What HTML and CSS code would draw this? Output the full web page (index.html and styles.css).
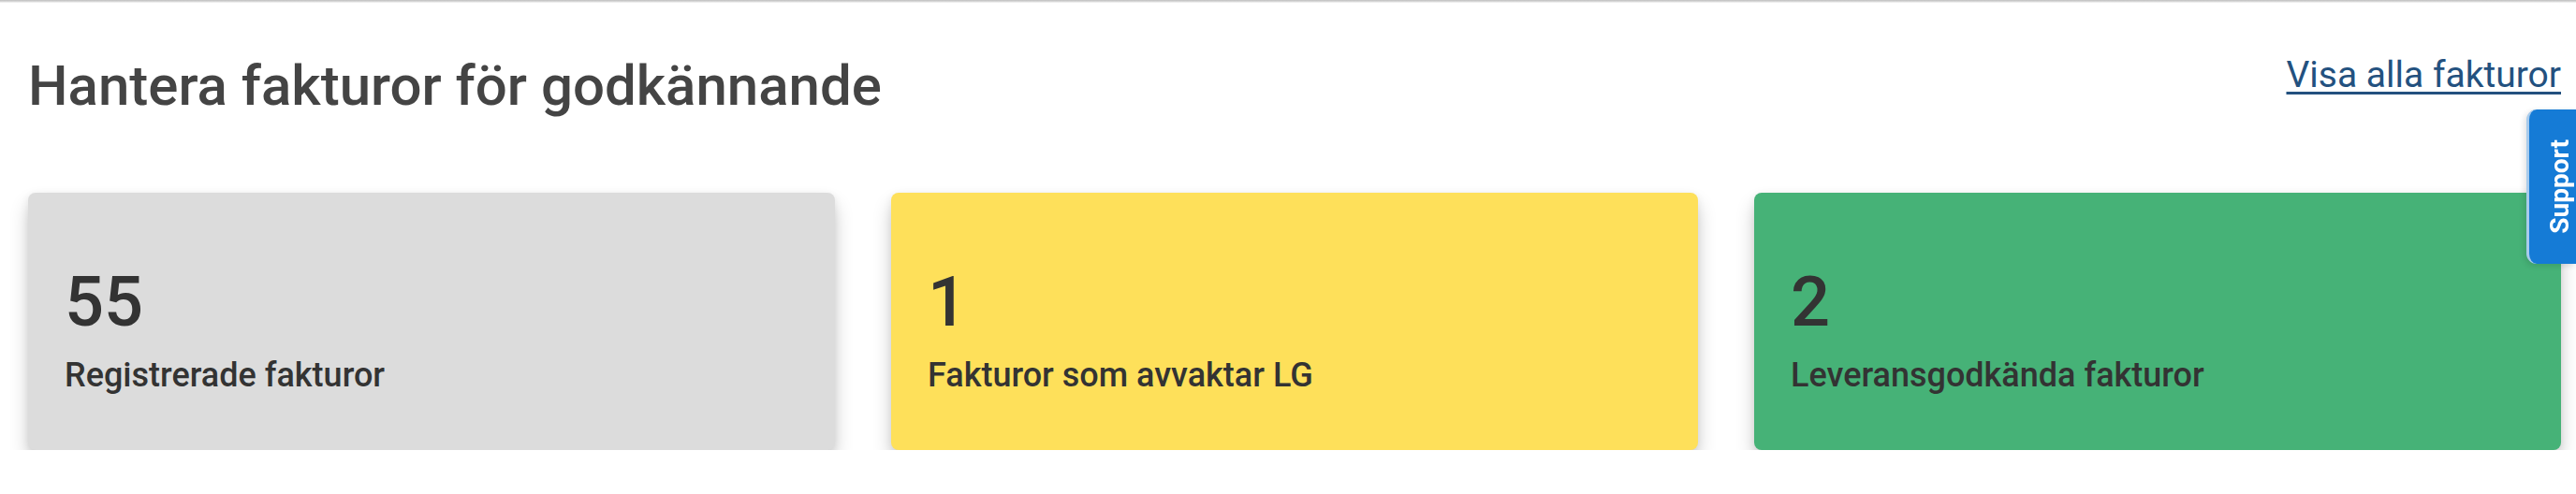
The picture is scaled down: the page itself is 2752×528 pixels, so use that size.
FILE: index.html
```html
<!DOCTYPE html>
<html lang="sv">
<head>
<meta charset="utf-8">
<title>Hantera fakturor för godkännande</title>
<link rel="stylesheet" href="styles.css">
</head>
<body>
<div class="topline"></div>
<main class="page">
  <header class="header">
    <h1 class="title">Hantera fakturor för godkännande</h1>
    <a class="all-link" href="#">Visa alla fakturor</a>
  </header>
  <section class="cards">
    <div class="card card-gray">
      <div class="card-number">55</div>
      <div class="card-label">Registrerade fakturor</div>
    </div>
    <div class="card card-yellow">
      <div class="card-number">1</div>
      <div class="card-label">Fakturor som avvaktar LG</div>
    </div>
    <div class="card card-green">
      <div class="card-number">2</div>
      <div class="card-label">Leveransgodkända fakturor</div>
    </div>
  </section>
</main>
<a class="support-tab" href="#"><span class="support-text">Support</span></a>
</body>
</html>
```
FILE: styles.css
```css
* { box-sizing: border-box; }
html, body {
  margin: 0;
  padding: 0;
  background: #ffffff;
  font-family: Roboto, "Liberation Sans", Arial, sans-serif;
}
.topline {
  height: 3px;
  background: linear-gradient(#bdbdbd, #e2e2e2 70%, #ffffff);
}
.page {
  padding: 53px 16px 0 30px;
}
.header {
  display: flex;
  justify-content: space-between;
  align-items: flex-start;
}
.title {
  margin: 0;
  font-size: 60px;
  line-height: 72px;
  font-weight: 500;
  color: #444444;
}
.all-link {
  margin-top: 0;
  font-size: 39px;
  line-height: 48px;
  color: #23517f;
  text-decoration: underline;
  text-decoration-thickness: 3px;
  text-underline-offset: 5px;
}
.cards {
  margin-top: 78px;
  display: grid;
  grid-template-columns: repeat(3, 1fr);
  gap: 60px;
}
.card {
  height: 275px;
  padding: 80px 40px 0 39px;
  border-radius: 8px;
  box-shadow: 0 12px 20px rgba(0, 0, 0, 0.2), 0 2px 8px rgba(0, 0, 0, 0.07);
  color: #333333;
}
.card-gray { background: #dcdcdc; }
.card-yellow { background: #fee05a; }
.card-green { background: #46b277; }
.card-number {
  font-size: 74px;
  line-height: 74px;
  font-weight: 500;
}
.card-label {
  margin-top: 19px;
  font-size: 36px;
  line-height: 44px;
  font-weight: 500;
}
.support-tab {
  position: fixed;
  right: 0;
  top: 117px;
  width: 53px;
  height: 165px;
  padding-left: 15px;
  display: flex;
  align-items: center;
  justify-content: center;
  background: #157bd6;
  border-left: 3px solid #a8cbec;
  border-radius: 11px 0 0 11px;
  box-shadow: -2px 2px 6px rgba(0, 0, 0, 0.12);
  text-decoration: none;
}
.support-text {
  writing-mode: vertical-rl;
  transform: rotate(180deg);
  color: #ffffff;
  font-size: 28px;
  font-weight: 700;
  line-height: 1;
}
```
